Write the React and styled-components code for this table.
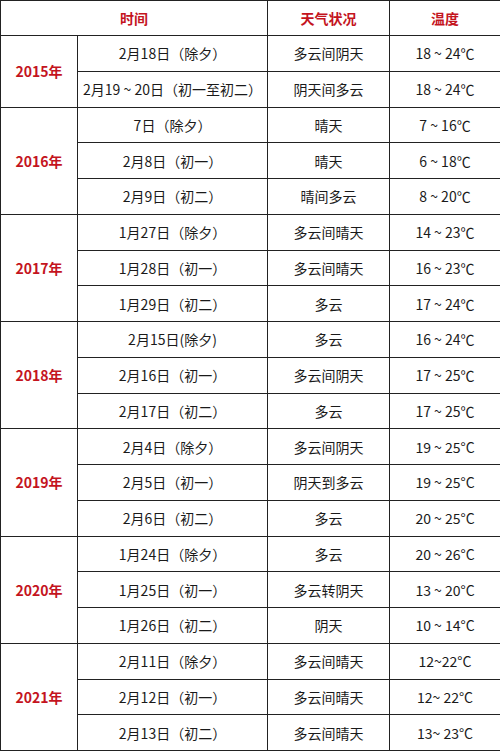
import React from 'react'
import styled, { createGlobalStyle } from 'styled-components'

const GlobalStyle = createGlobalStyle`
  html, body {
    margin: 0;
    padding: 0;
    background: #ffffff;
  }
  body {
    font-family: "Noto Sans CJK SC", "Noto Sans", sans-serif;
  }
`

const Table = styled.table`
  width: 500px;
  height: 751px;
  border-collapse: collapse;
  table-layout: fixed;
  font-size: 14px;
  color: #1a1a1a;
`

const Col = styled.col`
  width: ${({ w }) => w}px;
`

const HeadCell = styled.th`
  height: 34px;
  border: 1px solid #222;
  color: #c4141e;
  font-weight: 700;
  font-size: 14px;
  text-align: center;
  padding: 0;
`

const YearCell = styled.td`
  border: 1px solid #222;
  color: #c4141e;
  font-weight: 700;
  font-size: 14px;
  text-align: center;
  padding: 0;
`

const Cell = styled.td`
  height: 34px;
  border: 1px solid #222;
  text-align: center;
  padding: 0;
  white-space: nowrap;
`

const data = [
  {
    year: '2015年',
    rows: [
      ['2月18日（除夕）', '多云间阴天', '18 ~ 24℃'],
      ['2月19 ~ 20日（初一至初二）', '阴天间多云', '18 ~ 24℃'],
    ],
  },
  {
    year: '2016年',
    rows: [
      ['7日（除夕）', '晴天', '7 ~ 16℃'],
      ['2月8日（初一）', '晴天', '6 ~ 18℃'],
      ['2月9日（初二）', '晴间多云', '8 ~ 20℃'],
    ],
  },
  {
    year: '2017年',
    rows: [
      ['1月27日（除夕）', '多云间晴天', '14 ~ 23℃'],
      ['1月28日（初一）', '多云间晴天', '16 ~ 23℃'],
      ['1月29日（初二）', '多云', '17 ~ 24℃'],
    ],
  },
  {
    year: '2018年',
    rows: [
      ['2月15日(除夕)', '多云', '16 ~ 24℃'],
      ['2月16日（初一）', '多云间阴天', '17 ~ 25℃'],
      ['2月17日（初二）', '多云', '17 ~ 25℃'],
    ],
  },
  {
    year: '2019年',
    rows: [
      ['2月4日（除夕）', '多云间阴天', '19 ~ 25°C'],
      ['2月5日（初一）', '阴天到多云', '19 ~ 25°C'],
      ['2月6日（初二）', '多云', '20 ~ 25°C'],
    ],
  },
  {
    year: '2020年',
    rows: [
      ['1月24日（除夕）', '多云', '20 ~ 26°C'],
      ['1月25日（初一）', '多云转阴天', '13 ~ 20°C'],
      ['1月26日（初二）', '阴天', '10 ~ 14°C'],
    ],
  },
  {
    year: '2021年',
    rows: [
      ['2月11日（除夕）', '多云间晴天', '12~22°C'],
      ['2月12日（初一）', '多云间晴天', '12~ 22°C'],
      ['2月13日（初二）', '多云间晴天', '13~ 23°C'],
    ],
  },
]

export default function App() {
  return (
    <>
      <GlobalStyle />
      <Table>
        <colgroup>
          <Col w={77} />
          <Col w={190} />
          <Col w={122} />
          <Col w={111} />
        </colgroup>
        <thead>
          <tr>
            <HeadCell colSpan={2}>时间</HeadCell>
            <HeadCell>天气状况</HeadCell>
            <HeadCell>温度</HeadCell>
          </tr>
        </thead>
        <tbody>
          {data.map((group) =>
            group.rows.map((row, i) => (
              <tr key={group.year + i}>
                {i === 0 && <YearCell rowSpan={group.rows.length}>{group.year}</YearCell>}
                {row.map((text, j) => (
                  <Cell key={j}>{text}</Cell>
                ))}
              </tr>
            ))
          )}
        </tbody>
      </Table>
    </>
  )
}
